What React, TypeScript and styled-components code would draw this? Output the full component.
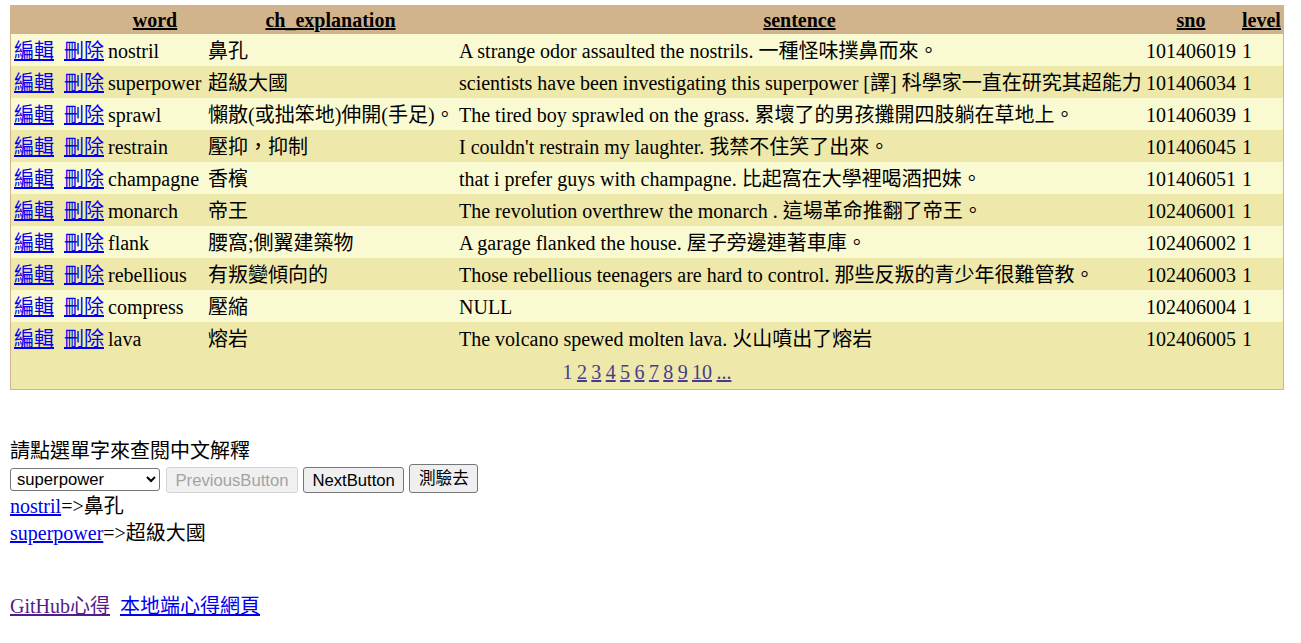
import React from "react";
import styled, { createGlobalStyle } from "styled-components";

const GlobalStyle = createGlobalStyle`
  html, body {
    margin: 0;
    padding: 0;
    background: #ffffff;
  }
  body {
    font-family: "Liberation Serif", "Noto Sans CJK TC", serif;
    font-size: 20px;
    color: #000000;
  }
`;

const Page = styled.div`
  padding: 5px 0 0 10px;
`;

const Grid = styled.table`
  box-sizing: border-box;
  width: 1274px;
  table-layout: fixed;
  border-collapse: separate;
  border-spacing: 0;
  border: 1px solid #d2b48c;
  background: #fafad2;
`;

const HeadRow = styled.tr`
  background: #d2b48c;
`;

const HeadCell = styled.th<{ $w: number }>`
  box-sizing: border-box;
  width: ${(p) => p.$w}px;
  height: 28px;
  padding: 0 3px;
  font-weight: bold;
  text-align: center;
  white-space: nowrap;
  line-height: 23px;
`;

const SortLink = styled.a`
  color: #000000;
  text-decoration: underline;
  cursor: pointer;
`;

const BodyRow = styled.tr<{ $alt: boolean }>`
  background: ${(p) => (p.$alt ? "#eee8aa" : "#fafad2")};
`;

const Cell = styled.td`
  box-sizing: border-box;
  height: 32px;
  padding: 2px 3px 0 3px;
  line-height: 28px;
  white-space: nowrap;
  overflow: visible;
  vertical-align: middle;
`;

const CmdLink = styled.a<{ $gap?: boolean }>`
  color: #0000ee;
  text-decoration: underline;
  cursor: pointer;
  margin-right: ${(p) => (p.$gap ? "10px" : "0")};
`;

const PagerRow = styled.tr`
  background: #eee8aa;
`;

const PagerCell = styled.td`
  height: 35px;
  padding: 0;
  text-align: center;
  color: #483d8b;
  vertical-align: middle;
`;

const PagerList = styled.div`
  display: inline-flex;
  gap: 4.4px;
  line-height: 24px;
`;

const PageLink = styled.a`
  color: #483d8b;
  text-decoration: underline;
  cursor: pointer;
`;

const Prompt = styled.div`
  margin-top: 48px;
  line-height: 26px;
`;

const Controls = styled.div`
  display: flex;
  align-items: flex-end;
  gap: 5px;
  height: 29px;
`;

const WordSelect = styled.select`
  box-sizing: border-box;
  width: 150px;
  height: 23px;
  margin: 0 1px 2px 0;
  font-family: "Liberation Sans", Arial, sans-serif;
  font-size: 16.67px;
  color: #000;
  background: #fff;
  border: 1px solid #767676;
  border-radius: 3px;
  padding: 0 2px;
`;

const Btn = styled.button<{ $tall?: boolean }>`
  box-sizing: border-box;
  height: ${(p) => (p.$tall ? "29px" : "26px")};
  margin: 0;
  padding: 0 8.5px;
  font-family: "Liberation Sans", "Noto Sans CJK TC", Arial, sans-serif;
  font-size: 16.67px;
  line-height: 19px;
  color: #000;
  background: #efefef;
  border: 1px solid #767676;
  border-radius: 3px;
  &:disabled {
    color: #a3a3a3;
    background: #f0f0f0;
    border-color: #d4d4d4;
  }
`;

const PairLine = styled.div`
  line-height: 27px;
`;

const WordLink = styled.a`
  color: #0000ee;
  text-decoration: underline;
  cursor: pointer;
`;

const Footer = styled.div`
  margin-top: 46px;
  line-height: 27px;
  display: flex;
  gap: 10px;
`;

const FootLink = styled.a<{ $visited?: boolean }>`
  color: ${(p) => (p.$visited ? "#551a8b" : "#0000ee")};
  text-decoration: underline;
  cursor: pointer;
`;

type Row = {
  word: string;
  ch: string;
  sentence: string;
  sno: string;
  level: string;
};

const rows: Row[] = [
  { word: "nostril", ch: "鼻孔", sentence: "A strange odor assaulted the nostrils. 一種怪味撲鼻而來。", sno: "101406019", level: "1" },
  { word: "superpower", ch: "超級大國", sentence: "scientists have been investigating this superpower [譯] 科學家一直在研究其超能力", sno: "101406034", level: "1" },
  { word: "sprawl", ch: "懶散(或拙笨地)伸開(手足)。", sentence: "The tired boy sprawled on the grass. 累壞了的男孩攤開四肢躺在草地上。", sno: "101406039", level: "1" },
  { word: "restrain", ch: "壓抑，抑制", sentence: "I couldn't restrain my laughter. 我禁不住笑了出來。", sno: "101406045", level: "1" },
  { word: "champagne", ch: "香檳", sentence: "that i prefer guys with champagne. 比起窩在大學裡喝酒把妹。", sno: "101406051", level: "1" },
  { word: "monarch", ch: "帝王", sentence: "The revolution overthrew the monarch . 這場革命推翻了帝王。", sno: "102406001", level: "1" },
  { word: "flank", ch: "腰窩;側翼建築物", sentence: "A garage flanked the house. 屋子旁邊連著車庫。", sno: "102406002", level: "1" },
  { word: "rebellious", ch: "有叛變傾向的", sentence: "Those rebellious teenagers are hard to control. 那些反叛的青少年很難管教。", sno: "102406003", level: "1" },
  { word: "compress", ch: "壓縮", sentence: "NULL", sno: "102406004", level: "1" },
  { word: "lava", ch: "熔岩", sentence: "The volcano spewed molten lava. 火山噴出了熔岩", sno: "102406005", level: "1" },
];

const pages = ["2", "3", "4", "5", "6", "7", "8", "9", "10", "..."];

export default function App() {
  return (
    <>
      <GlobalStyle />
      <Page>
        <Grid>
          <thead>
            <HeadRow>
              <HeadCell $w={94}>&nbsp;</HeadCell>
              <HeadCell $w={100}><SortLink>word</SortLink></HeadCell>
              <HeadCell $w={251}><SortLink>ch_explanation</SortLink></HeadCell>
              <HeadCell $w={687}><SortLink>sentence</SortLink></HeadCell>
              <HeadCell $w={96}><SortLink>sno</SortLink></HeadCell>
              <HeadCell $w={44}><SortLink>level</SortLink></HeadCell>
            </HeadRow>
          </thead>
          <tbody>
            {rows.map((r, i) => (
              <BodyRow key={r.sno} $alt={i % 2 === 1}>
                <Cell>
                  <CmdLink $gap>編輯</CmdLink>
                  <CmdLink>刪除</CmdLink>
                </Cell>
                <Cell>{r.word}</Cell>
                <Cell>{r.ch}</Cell>
                <Cell>{r.sentence}</Cell>
                <Cell>{r.sno}</Cell>
                <Cell>{r.level}</Cell>
              </BodyRow>
            ))}
            <PagerRow>
              <PagerCell colSpan={6}>
                <PagerList>
                  <span>1</span>
                  {pages.map((p) => (
                    <PageLink key={p}>{p}</PageLink>
                  ))}
                </PagerList>
              </PagerCell>
            </PagerRow>
          </tbody>
        </Grid>

        <Prompt>請點選單字來查閱中文解釋</Prompt>
        <Controls>
          <WordSelect defaultValue="superpower">
            {rows.map((r) => (
              <option key={r.word} value={r.word}>{r.word}</option>
            ))}
          </WordSelect>
          <Btn disabled>PreviousButton</Btn>
          <Btn>NextButton</Btn>
          <Btn $tall>測驗去</Btn>
        </Controls>
        <PairLine><WordLink>nostril</WordLink>=&gt;鼻孔</PairLine>
        <PairLine><WordLink>superpower</WordLink>=&gt;超級大國</PairLine>
        <Footer>
          <FootLink $visited>GitHub心得</FootLink>
          <FootLink>本地端心得網頁</FootLink>
        </Footer>
      </Page>
    </>
  );
}
